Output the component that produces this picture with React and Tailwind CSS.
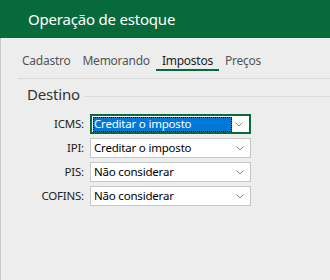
export default function App() {
  const tabs = ["Cadastro", "Memorando", "Impostos", "Preços"];
  const rows = [
    { label: "ICMS:", value: "Creditar o imposto", focused: true },
    { label: "IPI:", value: "Creditar o imposto" },
    { label: "PIS:", value: "Não considerar" },
    { label: "COFINS:", value: "Não considerar" },
  ];

  return (
    <div className="w-[330px] h-[280px] bg-[#ededed] flex flex-col overflow-hidden font-['Noto_Sans',sans-serif]">
      <div className="h-[38px] bg-[#076a3a] flex items-center pl-[28px] text-white text-[15px] tracking-[-0.2px] shrink-0">
        Operação de estoque
      </div>

      <div className="flex-1 border-l border-[#c8c8c8] flex flex-col">
        <div className="flex pl-[15px] pt-[14px]">
          {tabs.map((t) => (
            <div
              key={t}
              className={
                "px-[6px] h-[19px] text-[12px] tracking-[-0.25px] leading-[17px] " +
                (t === "Impostos"
                  ? "border-b-2 border-[#076a3a] text-[#222]"
                  : "border-b-2 border-transparent text-[#555]")
              }
            >
              {t}
            </div>
          ))}
        </div>

        <div className="ml-[17px] mt-[7px] border-t border-[#dadada] flex flex-col">
          <div className="flex items-center mt-[5px] h-[20px]">
            <span className="ml-[9px] text-[15px] tracking-[-0.2px] text-[#333] leading-[20px]">Destino</span>
            <div className="flex-1 h-px bg-[#dadada] ml-[5px] mt-[4px]" />
          </div>

          <div className="mt-[10px] flex flex-col gap-[4px]">
            {rows.map((r) => (
              <div key={r.label} className="flex items-center h-[20px]">
                <div className="w-[66px] text-right text-[11.5px] tracking-[-0.2px] text-[#222]">{r.label}</div>
                <div
                  className={
                    "ml-[6px] w-[161px] h-[20px] bg-white flex items-center justify-between " +
                    (r.focused ? "border-2 border-[#076a3a] pl-[1px]" : "border border-[#c8c8c8] pl-[3px]")
                  }
                >
                  {r.focused ? (
                    <span className="w-[139px] h-[15px] bg-[#0078d7] text-white text-[11.5px] tracking-[-0.2px] leading-[14px] pl-px outline-1 outline-dotted outline-black -outline-offset-1">
                      {r.value}
                    </span>
                  ) : (
                    <span className="text-[11.5px] tracking-[-0.2px] leading-[14px] text-black">{r.value}</span>
                  )}
                  <svg width="8" height="5" viewBox="0 0 8 5" className="mr-[6px]">
                    <path d="M0.5 0.5 L4 4 L7.5 0.5" fill="none" stroke="#888" strokeWidth="1" />
                  </svg>
                </div>
              </div>
            ))}
          </div>
        </div>
      </div>
    </div>
  );
}
